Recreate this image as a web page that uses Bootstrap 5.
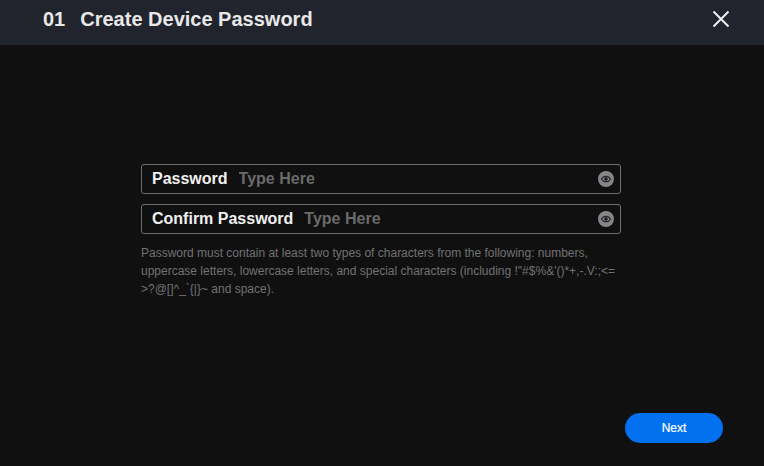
<!DOCTYPE html>
<html lang="en">
<head>
<meta charset="utf-8">
<title>Create Device Password</title>
<link rel="stylesheet" href="https://cdn.jsdelivr.net/npm/bootstrap@5.3.0/dist/css/bootstrap.min.css">
<style>
html, body { height: 466px; overflow: hidden; }
body { background: #101011; font-family: "Liberation Sans", Arial, sans-serif; }
.wiz-page { height: 466px; }
.wiz-head { height: 45px; background: #21242c; padding: 0 34px 0 43px; color: #e8e8e8; }
.wiz-title { font-size: 20px; font-weight: 700; line-height: 38px; margin: 0; padding-bottom: 7px; color: #e8e8e8; height: 45px; }
.wiz-num { margin-right: 15px; }
.wiz-close { background: none; border: 0; padding: 0; width: 18px; height: 18px; margin-bottom: 7px; line-height: 0; }
.wiz-body { padding: 119px 143px 0 141px; }
.wiz-field { height: 30px; border: 1px solid #6e6e6e; border-radius: 3px; padding: 0 6px 0 10px; margin-bottom: 10px; font-size: 16px; }
.wiz-label { font-weight: 700; color: #f0f0f0; margin-right: 11px; white-space: nowrap; }
.wiz-input { background: transparent; border: 0; outline: 0; flex: 1; min-width: 0; padding: 0; color: #eee; font-size: 16px; font-weight: 700; font-family: inherit; }
.wiz-input::placeholder { color: #6a6a6a; opacity: 1; }
.wiz-eye { background: none; border: 0; padding: 0; line-height: 0; width: 16px; height: 16px; }
.wiz-hint { font-size: 12px; line-height: 18px; color: #727272; margin: 0; }
.wiz-foot { padding: 0 41px 23px 0; }
.wiz-next { width: 98px; height: 30px; border: 0; border-radius: 15px; background: #0270ef; color: #fff; font-size: 12px; font-weight: 400; padding: 0; -webkit-text-stroke: 0.2px #fff; }
</style>
</head>
<body>
<div class="wiz-page d-flex flex-column">
  <header class="wiz-head d-flex align-items-center justify-content-between">
    <h1 class="wiz-title d-flex"><span class="wiz-num">01</span><span>Create Device Password</span></h1>
    <button class="wiz-close" type="button" aria-label="Close">
      <svg width="18" height="18" viewBox="0 0 18 18"><path d="M1.5 1.5 16.5 16.5M16.5 1.5 1.5 16.5" stroke="#eef0f2" stroke-width="2" fill="none"/></svg>
    </button>
  </header>
  <main class="wiz-body flex-grow-1">
    <div class="wiz-field d-flex align-items-center">
      <label class="wiz-label" for="p1">Password</label>
      <input class="wiz-input" id="p1" type="password" placeholder="Type Here">
      <button class="wiz-eye" type="button" aria-label="Show password">
        <svg width="16" height="16" viewBox="0 0 16 16"><circle cx="8" cy="8" r="8" fill="#84868a"/><path d="M3.4 8C4.5 6.2 6.1 5.2 8 5.2S11.5 6.2 12.6 8C11.5 9.8 9.9 10.8 8 10.8S4.5 9.8 3.4 8Z" fill="none" stroke="#1a1a1c" stroke-width="1.1"/><circle cx="8" cy="8" r="1.7" fill="#1a1a1c"/></svg>
      </button>
    </div>
    <div class="wiz-field d-flex align-items-center">
      <label class="wiz-label" for="p2">Confirm Password</label>
      <input class="wiz-input" id="p2" type="password" placeholder="Type Here">
      <button class="wiz-eye" type="button" aria-label="Show password">
        <svg width="16" height="16" viewBox="0 0 16 16"><circle cx="8" cy="8" r="8" fill="#84868a"/><path d="M3.4 8C4.5 6.2 6.1 5.2 8 5.2S11.5 6.2 12.6 8C11.5 9.8 9.9 10.8 8 10.8S4.5 9.8 3.4 8Z" fill="none" stroke="#1a1a1c" stroke-width="1.1"/><circle cx="8" cy="8" r="1.7" fill="#1a1a1c"/></svg>
      </button>
    </div>
    <p class="wiz-hint">Password must contain at least two types of characters from the following: numbers, uppercase letters, lowercase letters, and special characters (including !"#$%&amp;'()*+,-.V:;&lt;=<br>&gt;?@[]^_`{|}~ and space).</p>
  </main>
  <footer class="wiz-foot d-flex justify-content-end">
    <button class="wiz-next btn" type="button">Next</button>
  </footer>
</div>
<script src="https://cdn.jsdelivr.net/npm/bootstrap@5.3.0/dist/js/bootstrap.bundle.min.js"></script>
</body>
</html>
